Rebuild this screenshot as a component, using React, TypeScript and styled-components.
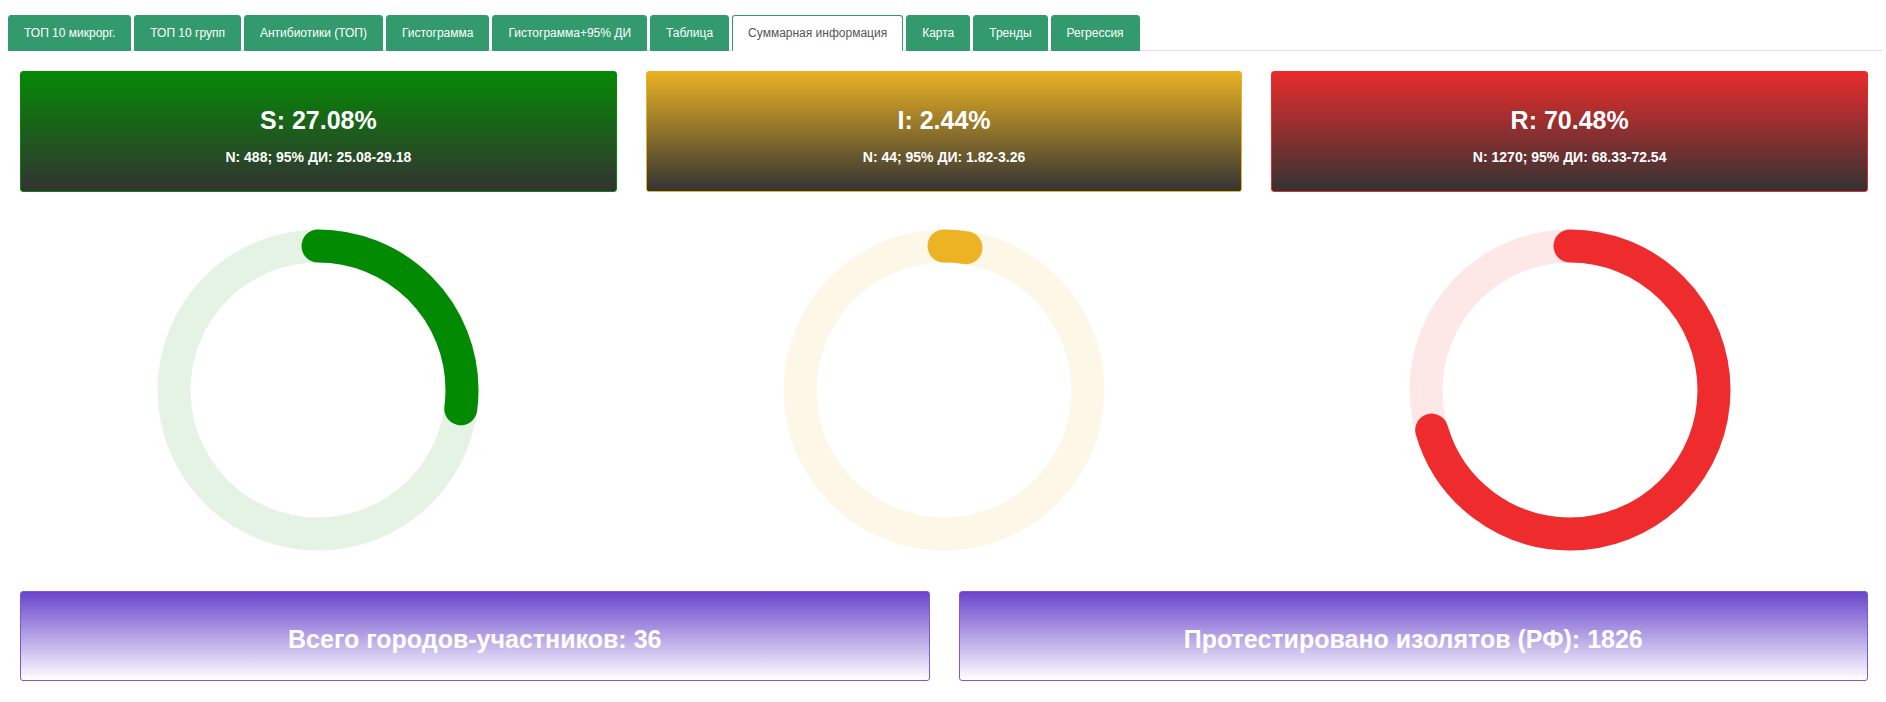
import React from "react";
import styled, { createGlobalStyle } from "styled-components";

const Global = createGlobalStyle`
  html, body { margin: 0; padding: 0; background: #fff; }
  body { font-family: "Liberation Sans", Arial, sans-serif; }
  * { box-sizing: border-box; }
`;

const Page = styled.div`
  padding: 15px 4px 0 8px;
`;

const TabBar = styled.ul`
  display: flex;
  gap: 3px;
  list-style: none;
  margin: 0;
  padding: 0;
  border-bottom: 1px solid #dddddd;
`;

const Tab = styled.li<{ $active?: boolean }>`
  height: 36px;
  margin-bottom: -1px;
  padding: 0 15px;
  display: flex;
  align-items: center;
  font-size: 12px;
  color: ${(p) => (p.$active ? "#555555" : "#ffffff")};
  background: ${(p) => (p.$active ? "#ffffff" : "#339a6e")};
  border: 1px solid #339a6e;
  border-bottom-color: ${(p) => (p.$active ? "#ffffff" : "#339a6e")};
  border-radius: 3px 3px 0 0;
  white-space: nowrap;
`;

const Content = styled.div`
  padding: 20px 14px 0 12px;
`;

const Columns = styled.div`
  display: grid;
  grid-template-columns: repeat(3, 1fr);
  column-gap: 29px;
`;

const Column = styled.div`
  display: flex;
  flex-direction: column;
  align-items: center;
`;

const StatCard = styled.div<{ $top: string }>`
  width: 100%;
  height: 121px;
  border: 1px solid ${(p) => p.$top};
  border-radius: 3px;
  background: linear-gradient(to bottom, ${(p) => p.$top}, #333333);
  color: #ffffff;
  display: flex;
  flex-direction: column;
  align-items: center;
  justify-content: center;
  padding-top: 6px;
`;

const StatTitle = styled.div`
  font-size: 25px;
  font-weight: bold;
  line-height: 30px;
`;

const StatSub = styled.div`
  margin-top: 14px;
  font-size: 14px;
  font-weight: bold;
  line-height: 16px;
`;

const Donut = styled.svg`
  display: block;
  margin-top: 33px;
`;

const Totals = styled.div`
  display: grid;
  grid-template-columns: 1fr 1fr;
  column-gap: 29px;
  margin-top: 36px;
`;

const TotalCard = styled.div`
  height: 90px;
  border: 1px solid #7d57d9;
  border-radius: 3px;
  background: linear-gradient(to bottom, #6a45cb, #ffffff);
  color: #ffffff;
  display: flex;
  align-items: center;
  justify-content: center;
  padding-top: 6px;
  font-size: 25px;
  font-weight: bold;
`;

const tabs = [
  "ТОП 10 микрорг.",
  "ТОП 10 групп",
  "Антибиотики (ТОП)",
  "Гистограмма",
  "Гистограмма+95% ДИ",
  "Таблица",
  "Суммарная информация",
  "Карта",
  "Тренды",
  "Регрессия",
];

const stats = [
  { label: "S: 27.08%", sub: "N: 488; 95% ДИ: 25.08-29.18", pct: 27.08, top: "#058905", arc: "#038a03", track: "#e5f3e5" },
  { label: "I: 2.44%", sub: "N: 44; 95% ДИ: 1.82-3.26", pct: 2.44, top: "#e9b123", arc: "#ecb425", track: "#fdf7e8" },
  { label: "R: 70.48%", sub: "N: 1270; 95% ДИ: 68.33-72.54", pct: 70.48, top: "#e82c2c", arc: "#ee2c2e", track: "#fde7e7" },
];

function Ring({ pct, arc, track }: { pct: number; arc: string; track: string }) {
  const size = 330;
  const r = 144;
  const c = 2 * Math.PI * r;
  const len = (pct / 100) * c;
  return (
    <Donut width={size} height={size} viewBox={`0 0 ${size} ${size}`}>
      <circle cx={165} cy={165} r={r} fill="none" stroke={track} strokeWidth={33} />
      <circle
        cx={165}
        cy={165}
        r={r}
        fill="none"
        stroke={arc}
        strokeWidth={33}
        strokeLinecap="round"
        strokeDasharray={`${len} ${c}`}
        transform="rotate(-90 165 165)"
      />
    </Donut>
  );
}

export default function App() {
  return (
    <Page>
      <Global />
      <TabBar>
        {tabs.map((t) => (
          <Tab key={t} $active={t === "Суммарная информация"}>
            {t}
          </Tab>
        ))}
      </TabBar>
      <Content>
        <Columns>
          {stats.map((s) => (
            <Column key={s.label}>
              <StatCard $top={s.top}>
                <StatTitle>{s.label}</StatTitle>
                <StatSub>{s.sub}</StatSub>
              </StatCard>
              <Ring pct={s.pct} arc={s.arc} track={s.track} />
            </Column>
          ))}
        </Columns>
        <Totals>
          <TotalCard>Всего городов-участников: 36</TotalCard>
          <TotalCard>Протестировано изолятов (РФ): 1826</TotalCard>
        </Totals>
      </Content>
    </Page>
  );
}
